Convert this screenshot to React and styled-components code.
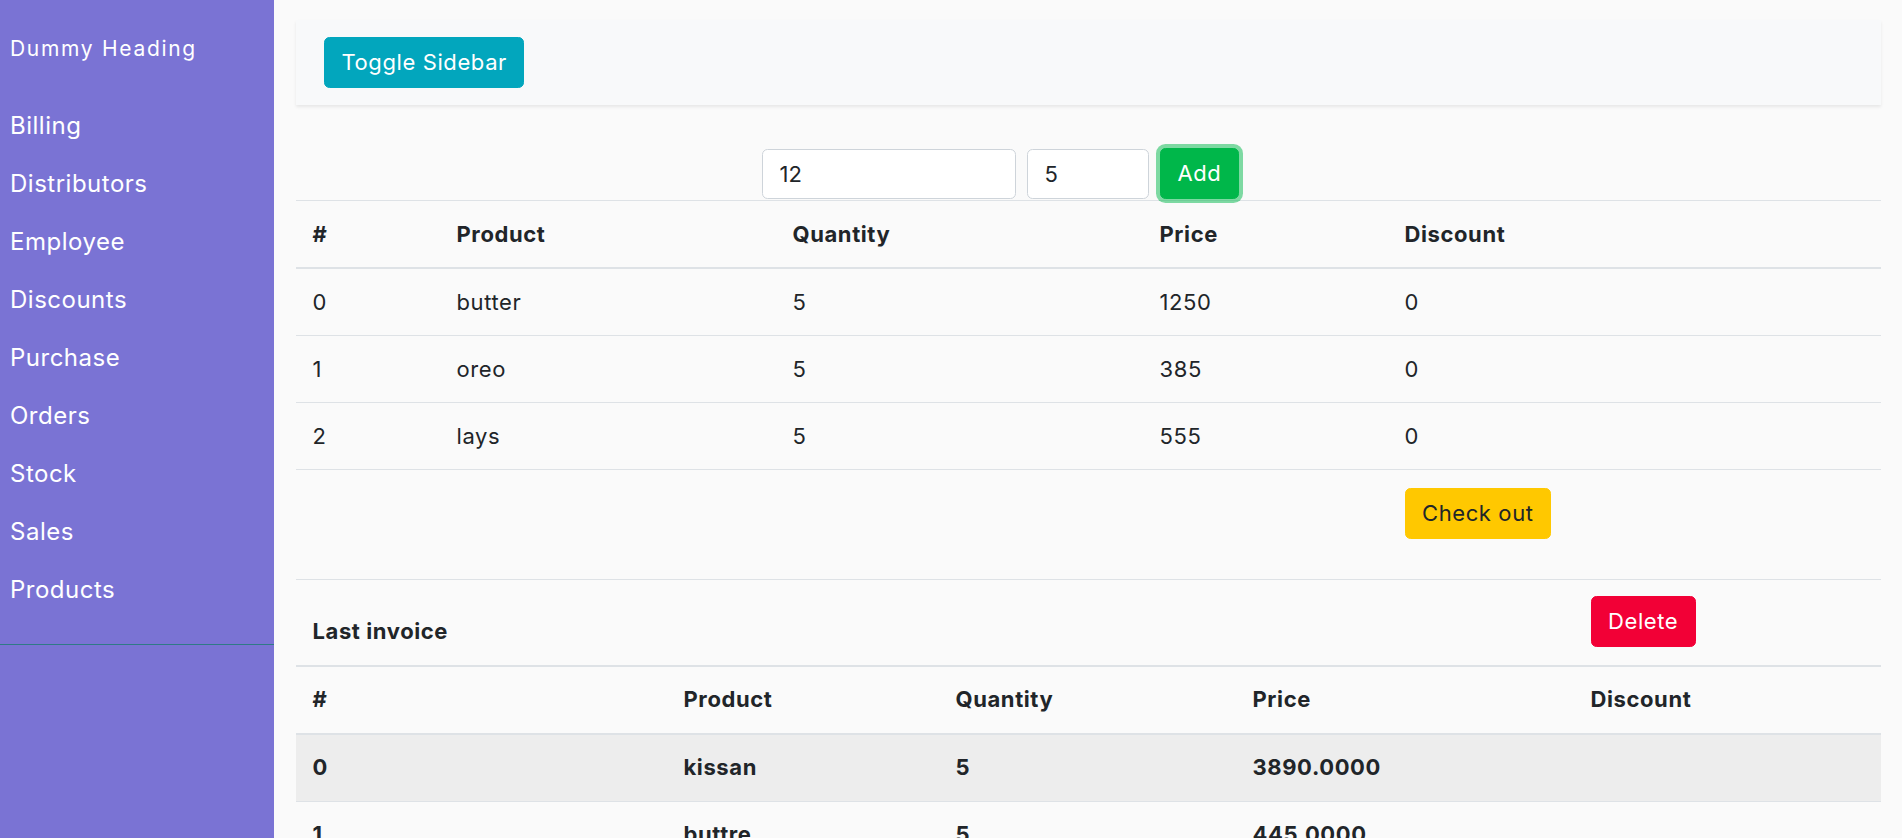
import styled, { createGlobalStyle } from 'styled-components';

const GlobalStyle = createGlobalStyle`
  body {
    margin: 0;
    background: #fafafa;
    font-family: Inter, "Open Sans", sans-serif;
    color: #212529;
  }
  * { box-sizing: border-box; }
`;

const Layout = styled.div`
  display: flex;
  min-height: 100vh;
`;

const Sidebar = styled.nav`
  width: 274px;
  flex-shrink: 0;
  background: #7a73d4;
  color: #fff;
`;

const Brand = styled.div`
  height: 96px;
  padding: 0 10px;
  display: flex;
  align-items: center;
  font-size: 21px;
  letter-spacing: 1.7px;
`;

const NavList = styled.ul`
  list-style: none;
  margin: 0;
  padding: 0 0 25px;
  border-bottom: 1px solid #2f7a86;
`;

const NavItem = styled.li`
  height: 58.1px;
  padding: 0 10px;
  display: flex;
  align-items: center;
  font-size: 24px;
  letter-spacing: 0.5px;
`;

const Main = styled.main`
  flex: 1;
  padding: 20px 21px 0 22px;
  overflow: hidden;
`;

const TopBar = styled.div`
  background: #f8f9fa;
  padding: 17px 28px;
  box-shadow: 0 2px 3px rgba(0, 0, 0, 0.08);
`;

const Button = styled.button`
  font-family: inherit;
  font-size: 22px;
  line-height: 33px;
  letter-spacing: 0.6px;
  padding: 8px 16.5px;
  border: 1px solid ${(p) => p.$bg};
  border-radius: 5.5px;
  background: ${(p) => p.$bg};
  color: ${(p) => p.$color || '#fff'};
  box-shadow: ${(p) => (p.$focus ? `0 0 0 4px ${p.$focus}` : 'none')};
  cursor: pointer;
`;

const FormRow = styled.form`
  display: flex;
  align-items: flex-start;
  gap: 11px;
  margin-top: 44px;
  padding-left: 466px;
  height: 51px;
`;

const Input = styled.input`
  width: ${(p) => p.$w}px;
  height: 50px;
  font-family: inherit;
  font-size: 22px;
  color: #212529;
  padding: 0 16.5px;
  background: #fff;
  border: 1px solid #ced4da;
  border-radius: 5.5px;
  outline: none;
`;

const Table = styled.table`
  width: 100%;
  table-layout: fixed;
  border-collapse: collapse;
  font-size: 22px;
  line-height: 33px;
  letter-spacing: 0.6px;
  border-top: ${(p) => (p.$top ? '1px solid #dee2e6' : 'none')};
`;

const Row = styled.tr`
  background: ${(p) => p.$bg || 'transparent'};
  border-bottom: ${(p) => (p.$thick ? '2.75px' : '1px')} solid #dee2e6;
  border-top: ${(p) => (p.$thickTop ? '2.75px solid #dee2e6' : 'none')};
`;

const Th = styled.th`
  text-align: left;
  font-weight: 700;
  padding: 16.5px;
  vertical-align: top;
`;

const Td = styled.td`
  padding: ${(p) => p.$pad || '16.5px'};
  font-weight: ${(p) => (p.$bold ? 700 : 400)};
  vertical-align: top;
`;

const links = ['Billing', 'Distributors', 'Employee', 'Discounts', 'Purchase', 'Orders', 'Stock', 'Sales', 'Products'];

const cart = [
  { id: 0, name: 'butter', qty: 5, price: 1250, discount: 0 },
  { id: 1, name: 'oreo', qty: 5, price: 385, discount: 0 },
  { id: 2, name: 'lays', qty: 5, price: 555, discount: 0 },
];

const invoice = [
  { id: 0, name: 'kissan', qty: 5, price: '3890.0000' },
  { id: 1, name: 'buttre', qty: 5, price: '445.0000' },
];

const cartCols = [144, 336, 367, 245, 493];
const invoiceCols = [371, 272, 297, 338, 307];

const Cols = ({ widths }) => (
  <colgroup>
    {widths.map((w, i) => (
      <col key={i} style={{ width: w }} />
    ))}
  </colgroup>
);

export default function App() {
  return (
    <>
      <GlobalStyle />
      <Layout>
        <Sidebar>
          <Brand>Dummy Heading</Brand>
          <NavList>
            {links.map((l) => (
              <NavItem key={l}>{l}</NavItem>
            ))}
          </NavList>
        </Sidebar>
        <Main>
          <TopBar>
            <Button $bg="#02a6bd">Toggle Sidebar</Button>
          </TopBar>

          <FormRow onSubmit={(e) => e.preventDefault()}>
            <Input $w={254} defaultValue="12" />
            <Input $w={122} defaultValue="5" />
            <Button $bg="#00b74a" $focus="rgba(0, 183, 74, 0.5)" style={{ marginTop: -1 }}>
              Add
            </Button>
          </FormRow>

          <Table $top>
            <Cols widths={cartCols} />
            <thead>
              <Row $thick>
                <Th>#</Th>
                <Th>Product</Th>
                <Th>Quantity</Th>
                <Th>Price</Th>
                <Th>Discount</Th>
              </Row>
            </thead>
            <tbody>
              {cart.map((c) => (
                <Row key={c.id}>
                  <Td>{c.id}</Td>
                  <Td>{c.name}</Td>
                  <Td>{c.qty}</Td>
                  <Td>{c.price}</Td>
                  <Td>{c.discount}</Td>
                </Row>
              ))}
              <Row>
                <Td />
                <Td />
                <Td />
                <Td />
                <Td $pad="18px 16.5px 40px">
                  <Button $bg="#ffc800" $color="#212529">Check out</Button>
                </Td>
              </Row>
            </tbody>
          </Table>

          <Table>
            <Cols widths={invoiceCols} />
            <thead>
              <Row>
                <Td $bold $pad="35px 16.5px 16.5px">Last invoice</Td>
                <Td />
                <Td />
                <Td />
                <Td $pad="15.5px 16.5px 16px">
                  <Button $bg="#f20036">Delete</Button>
                </Td>
              </Row>
            </thead>
            <tbody>
              <Row $thickTop $thick>
                <Th>#</Th>
                <Th>Product</Th>
                <Th>Quantity</Th>
                <Th>Price</Th>
                <Th>Discount</Th>
              </Row>
              {invoice.map((r, i) => (
                <Row key={r.id} $bg={i % 2 === 0 ? '#ededed' : 'transparent'}>
                  <Td $bold>{r.id}</Td>
                  <Td $bold>{r.name}</Td>
                  <Td $bold>{r.qty}</Td>
                  <Td $bold>{r.price}</Td>
                  <Td $bold />
                </Row>
              ))}
            </tbody>
          </Table>
        </Main>
      </Layout>
    </>
  );
}
